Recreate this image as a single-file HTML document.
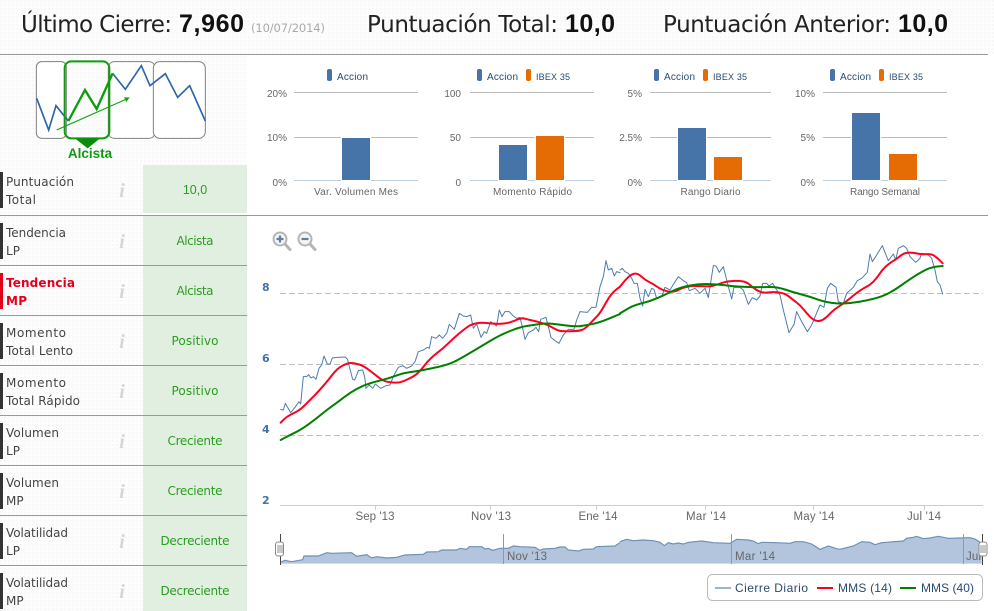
<!DOCTYPE html>
<html lang="es">
<head>
<meta charset="utf-8">
<title>Análisis</title>
<style>
html,body{margin:0;padding:0;background:#fff;width:994px;height:611px;overflow:hidden}
svg{display:block}
text{font-family:"DejaVu Sans","Liberation Sans",sans-serif}
.h{font-size:23px;fill:#222}
.hb{font-family:"Liberation Sans",sans-serif;font-size:25px;fill:#111;font-weight:bold}
.r{font-size:12px;fill:#444}
.rr{font-size:12px;fill:#e2001a;font-weight:bold}
.v{font-size:12px;fill:#2a9d1f;text-anchor:middle}
.i{font-family:"Liberation Serif",serif;font-size:20px;font-style:italic;font-weight:bold;fill:#d6d6d6;text-anchor:middle}
.l{font-family:"Liberation Sans",sans-serif;font-size:10px;fill:#274b6d}
.b{font-family:"Liberation Sans",sans-serif;font-size:9px;fill:#274b6d}
.y{font-family:"Liberation Sans",sans-serif;font-size:10px;fill:#666;text-anchor:end}
.c{font-family:"Liberation Sans",sans-serif;font-size:10px;fill:#666;text-anchor:middle}
.ya{font-size:11px;font-weight:bold;fill:#4572a7}
.x{font-family:"Liberation Sans",sans-serif;font-size:11.5px;fill:#666;text-anchor:middle}
.n{font-family:"Liberation Sans",sans-serif;font-size:11.5px;fill:#666}
.lg{font-family:"Liberation Sans",sans-serif;font-size:12px;fill:#274b6d}
</style>
</head>
<body>
<svg width="994" height="611" viewBox="0 0 994 611" xmlns="http://www.w3.org/2000/svg">
<defs>
<pattern id="d" width="4" height="4" patternUnits="userSpaceOnUse">
<rect width="4" height="4" fill="#fdfdfd"/><rect width="2" height="2" fill="#f8f8f8"/>
</pattern>
<clipPath id="nc"><rect x="281" y="530" width="702" height="40"/></clipPath>
</defs>
<rect width="994" height="611" fill="#fff"/>
<rect width="994" height="54" fill="url(#d)"/>
<rect y="55" width="247" height="110" fill="url(#d)"/>
<rect y="165" width="143" height="446" fill="url(#d)"/>

<!-- header -->
<text class="h" x="21" y="32" textLength="151">Último Cierre:</text>
<text class="hb" x="179" y="32" textLength="65">7,960</text>
<text x="251" y="32" font-size="11.5" fill="#aaa" textLength="74">(10/07/2014)</text>
<text class="h" x="367" y="32" textLength="191">Puntuación Total:</text>
<text class="hb" x="565" y="32" textLength="50">10,0</text>
<text class="h" x="663" y="32" textLength="228">Puntuación Anterior:</text>
<text class="hb" x="898" y="32" textLength="50">10,0</text>
<rect y="54" width="988" height="1" fill="#999"/>

<!-- logo -->
<g transform="translate(20,55) scale(.33333)">
<g fill="#fff" stroke="#808080" stroke-width="3">
<rect x="49" y="20" width="90" height="230" rx="16"/>
<rect x="265" y="20" width="140" height="230" rx="18"/>
<rect x="400" y="20" width="156" height="230" rx="20"/>
</g>
<polyline points="50,130 86,225 108,152 145,198" fill="none" stroke="#2b66ad" stroke-width="5"/>
<polyline points="278,55 316,103 364,32 390,92 436,56 473,127 509,92 556,198" fill="none" stroke="#2b66ad" stroke-width="5"/>
<rect x="134" y="19" width="134" height="231" rx="20" fill="none" stroke="#0c9c0c" stroke-width="6"/>
<polyline points="145,198 195,105 230,162 278,55" fill="none" stroke="#0c9c0c" stroke-width="7"/>
<line x1="110" y1="225" x2="320" y2="132" stroke="#17a317" stroke-width="3.5"/>
<polygon points="329,127 312,127 319,141" fill="#17a317"/>
<polygon points="165,250 240,250 203,280" fill="#0c8c0c"/>
</g>
<text x="90" y="158" font-size="13.5" font-weight="bold" fill="#119a11" text-anchor="middle" style="font-family:'Liberation Sans',sans-serif">Alcista</text>

<!-- rows -->
<rect x="143" y="165" width="104" height="48" fill="#e1efe0"/>
<rect x="143" y="216" width="104" height="395" fill="#e1efe0"/>
<rect y="215" width="988" height="1" fill="#999"/>
<g fill="#999">
<rect y="265" width="247" height="1"/><rect y="315" width="247" height="1"/><rect y="365" width="247" height="1"/>
<rect y="415" width="247" height="1"/><rect y="465" width="247" height="1"/><rect y="515" width="247" height="1"/><rect y="565" width="247" height="1"/>
</g>
<g fill="#333">
<rect y="172" width="3" height="36"/><rect y="223" width="3" height="36"/><rect y="323" width="3" height="36"/>
<rect y="373" width="3" height="36"/><rect y="423" width="3" height="36"/><rect y="473" width="3" height="36"/><rect y="523" width="3" height="36"/><rect y="573" width="3" height="36"/>
</g>
<rect y="273" width="3" height="36" fill="#e2001a"/>

<text class="r" x="6" y="186" textLength="68">Puntuación</text><text class="r" x="6" y="204" textLength="30">Total</text>
<text class="r" x="6" y="237" textLength="60">Tendencia</text><text class="r" x="6" y="255" textLength="14">LP</text>
<text class="rr" x="6" y="287" textLength="69">Tendencia</text><text class="rr" x="6" y="305" textLength="21">MP</text>
<text class="r" x="6" y="337" textLength="60">Momento</text><text class="r" x="6" y="355" textLength="67">Total Lento</text>
<text class="r" x="6" y="387" textLength="60">Momento</text><text class="r" x="6" y="405" textLength="74">Total Rápido</text>
<text class="r" x="6" y="437" textLength="53">Volumen</text><text class="r" x="6" y="455" textLength="14">LP</text>
<text class="r" x="6" y="487" textLength="53">Volumen</text><text class="r" x="6" y="505">MP</text>
<text class="r" x="6" y="537" textLength="62">Volatilidad</text><text class="r" x="6" y="555" textLength="14">LP</text>
<text class="r" x="6" y="587" textLength="62">Volatilidad</text><text class="r" x="6" y="605">MP</text>

<text class="i" x="122" y="197">i</text><text class="i" x="122" y="248">i</text><text class="i" x="122" y="298">i</text>
<text class="i" x="122" y="348">i</text><text class="i" x="122" y="398">i</text><text class="i" x="122" y="448">i</text>
<text class="i" x="122" y="498">i</text><text class="i" x="122" y="548">i</text><text class="i" x="122" y="598">i</text>

<text class="v" x="195" y="194" style="font-family:'Liberation Sans',sans-serif;font-size:12.5px">10,0</text>
<text class="v" x="195" y="245" textLength="37">Alcista</text>
<text class="v" x="195" y="295" textLength="37">Alcista</text>
<text class="v" x="195" y="345" textLength="47">Positivo</text>
<text class="v" x="195" y="395" textLength="47">Positivo</text>
<text class="v" x="195" y="445" textLength="55">Creciente</text>
<text class="v" x="195" y="495" textLength="55">Creciente</text>
<text class="v" x="195" y="545" textLength="69">Decreciente</text>
<text class="v" x="195" y="595" textLength="69">Decreciente</text>

<!-- small chart grids -->
<g fill="#bbb">
<rect x="294" y="92" width="124" height="1"/><rect x="294" y="137" width="124" height="1"/>
<rect x="470" y="92" width="124" height="1"/><rect x="470" y="137" width="124" height="1"/>
<rect x="650" y="92" width="121" height="1"/><rect x="650" y="137" width="121" height="1"/>
<rect x="823" y="92" width="124" height="1"/><rect x="823" y="137" width="124" height="1"/>
</g>
<g fill="#c0d0e0">
<rect x="294" y="180" width="124" height="1"/><rect x="470" y="180" width="124" height="1"/>
<rect x="650" y="180" width="121" height="1"/><rect x="823" y="180" width="124" height="1"/>
</g>
<g stroke="#fff" stroke-width="1">
<rect x="341.5" y="137.5" width="29" height="43" fill="#4673a8"/>
<rect x="498.5" y="144.5" width="29" height="36" fill="#4673a8"/>
<rect x="535.5" y="135.5" width="29" height="45" fill="#e56b05"/>
<rect x="677.5" y="127.5" width="29" height="53" fill="#4673a8"/>
<rect x="713.5" y="156.5" width="29" height="24" fill="#e56b05"/>
<rect x="851.5" y="112.5" width="29" height="68" fill="#4673a8"/>
<rect x="888.5" y="153.5" width="29" height="27" fill="#e56b05"/>
</g>
<g fill="#4673a8">
<rect x="327" y="69" width="5" height="12" rx="2"/><rect x="477" y="69" width="5" height="12" rx="2"/>
<rect x="654" y="69" width="5" height="12" rx="2"/><rect x="830" y="69" width="5" height="12" rx="2"/>
</g>
<g fill="#e56b05">
<rect x="526" y="69" width="5" height="12" rx="2"/><rect x="703" y="69" width="5" height="12" rx="2"/><rect x="879" y="69" width="5" height="12" rx="2"/>
</g>
<text class="l" x="337" y="80" textLength="31">Accion</text>
<text class="l" x="487" y="80" textLength="31">Accion</text><text class="b" x="536" y="80" textLength="34">IBEX 35</text>
<text class="l" x="664" y="80" textLength="31">Accion</text><text class="b" x="713" y="80" textLength="34">IBEX 35</text>
<text class="l" x="840" y="80" textLength="31">Accion</text><text class="b" x="889" y="80" textLength="34">IBEX 35</text>

<text class="y" x="287" y="97">20%</text><text class="y" x="287" y="141">10%</text><text class="y" x="287" y="186">0%</text>
<text class="y" x="461" y="97">100</text><text class="y" x="461" y="141">50</text><text class="y" x="461" y="186">0</text>
<text class="y" x="642" y="97">5%</text><text class="y" x="642" y="141">2.5%</text><text class="y" x="642" y="186">0%</text>
<text class="y" x="815" y="97">10%</text><text class="y" x="815" y="141">5%</text><text class="y" x="815" y="186">0%</text>

<text class="c" x="356" y="195" textLength="84">Var. Volumen Mes</text>
<text class="c" x="532.5" y="195" textLength="79">Momento Rápido</text>
<text class="c" x="710.5" y="195" textLength="60">Rango Diario</text>
<text class="c" x="885" y="195" textLength="70">Rango Semanal</text>

<!-- zoom icons -->
<g fill="none">
<line x1="285" y1="244" x2="290" y2="249.5" stroke="#b5b5b5" stroke-width="3" stroke-linecap="round"/>
<circle cx="280" cy="239" r="6.5" stroke="#b5b5b5" stroke-width="2" fill="#f4f4f4"/>
<path d="M276.5 239h7M280 235.5v7" stroke="#5f7f9f" stroke-width="2.2"/>
<line x1="310" y1="244" x2="315" y2="249.5" stroke="#b5b5b5" stroke-width="3" stroke-linecap="round"/>
<circle cx="305" cy="239" r="6.5" stroke="#b5b5b5" stroke-width="2" fill="#f4f4f4"/>
<path d="M301.5 239h7" stroke="#5f7f9f" stroke-width="2.2"/>
</g>

<!-- main chart -->
<g stroke="#c0c0c0" stroke-width="1" stroke-dasharray="6 3">
<line x1="280" y1="293.5" x2="983" y2="293.5"/>
<line x1="280" y1="364.5" x2="983" y2="364.5"/>
<line x1="280" y1="435.5" x2="983" y2="435.5"/>
</g>
<rect x="280" y="505" width="703" height="1" fill="#c0d0e0"/>
<g fill="#c0d0e0">
<rect x="375" y="505" width="1" height="5"/><rect x="490" y="505" width="1" height="5"/><rect x="596" y="505" width="1" height="5"/>
<rect x="705" y="505" width="1" height="5"/><rect x="813" y="505" width="1" height="5"/><rect x="924" y="505" width="1" height="5"/>
</g>
<text class="ya" x="262" y="291">8</text><text class="ya" x="262" y="362">6</text><text class="ya" x="262" y="433">4</text><text class="ya" x="262" y="504">2</text>
<text class="x" x="375" y="520" textLength="39">Sep '13</text>
<text class="x" x="491" y="520" textLength="40">Nov '13</text>
<text class="x" x="598" y="520" textLength="39">Ene '14</text>
<text class="x" x="706" y="520" textLength="40">Mar '14</text>
<text class="x" x="814" y="520" textLength="41">May '14</text>
<text class="x" x="924" y="520" textLength="34">Jul '14</text>

<g fill="none" stroke-linejoin="round" stroke-linecap="round">
<g transform="translate(250,220) scale(.33333)">
<polyline stroke="#4f7bb0" stroke-width="3" points="92,568 100,570 106,550 122,578 135,562 147,545 152,552 160,470 170,470 176,464 183,474 190,470 198,478 207,445 215,435 222,408 232,432 240,432 247,414 262,412 285,411 293,418 298,440 308,478 314,480 325,452 338,450 344,470 348,505 358,495 368,505 376,492 392,505 408,497 420,495 432,465 445,442 458,437 470,445 485,438 495,425 505,395 520,390 532,382 538,385 545,350 558,355 568,345 578,355 590,340 598,313 613,328 628,280 640,288 650,290 662,285 670,325 680,312 693,352 703,335 710,340 722,305 740,318 748,270 756,290 765,275 778,275 790,288 800,295 810,292 818,325 825,358 835,338 850,330 858,322 866,335 872,298 888,292 895,320 903,352 915,362 927,370 940,345 955,328 972,328 980,300 990,275 1012,277 1025,262 1038,262 1050,200 1060,170 1068,122 1075,150 1085,145 1093,168 1100,155 1110,158"/>
</g>
<g transform="translate(620,230) scale(.33333)">
<polyline stroke="#4f7bb0" stroke-width="3" points="0,120 7,115 15,125 25,130 35,145 42,160 52,160 60,205 68,228 75,178 85,200 95,175 102,178 110,205 125,200 135,172 150,180 162,160 175,140 190,152 200,158 208,182 225,175 240,190 255,175 265,203 280,107 288,108 298,127 310,110 325,170 335,207 342,172 360,172 370,180 385,223 397,203 410,210 420,198 428,160 440,160 447,168 458,160 470,180 480,195 490,240 507,308 522,283 530,245 545,275 562,305 575,285 600,225 612,232 622,175 632,160 648,172 655,215 670,220 680,190 700,172 712,152 725,145 742,127 750,72 757,95 770,75 787,47 805,92 820,72 827,90 835,55 850,47 860,55 870,80 887,97 900,85 905,70 925,75 935,85 945,120 952,155 960,165 968,192"/>
</g>
<g transform="translate(250,220) scale(.33333)">
<path stroke="#ff0020" stroke-width="6" d="M92,608 L101,599 Q110,590 120,585 Q130,580 141,574 Q152,568 163.5,556.5 Q175,545 190,530 Q205,515 220,497.5 Q235,480 248.5,462.5 Q262,445 278.5,436.5 Q295,428 305,429 Q315,430 327.5,433.5 Q340,437 355,448.5 Q370,460 385,471.5 Q400,483 412.5,485.5 Q425,488 437.5,488 Q450,488 465,481.5 Q480,475 492.5,467.5 Q505,460 522.5,437.5 Q540,415 560,400 Q580,385 595,370 Q610,355 625,342.5 Q640,330 650,322.5 Q660,315 670,312 Q680,309 690,308.5 Q700,308 710,309 Q720,310 732.5,311 Q745,312 757.5,311 Q770,310 780,307 Q790,304 802.5,298.5 Q815,293 825,296 Q835,299 845,301 Q855,303 867.5,306.5 Q880,310 890,314 Q900,318 912.5,325.5 Q925,333 937.5,333.5 Q950,334 967.5,333.5 Q985,333 995,330 Q1005,327 1017.5,313.5 Q1030,300 1040,290 Q1050,280 1062.5,257.5 Q1075,235 1082.5,225 Q1090,215 1100,207.5 L1110,200"/>
</g>
<g transform="translate(620,230) scale(.33333)">
<path stroke="#ff0020" stroke-width="6" d="M0,170 L10,157.5 Q20,145 29,138 Q38,131 46.5,131 Q55,131 65,140.5 Q75,150 87.5,156 Q100,162 112.5,171 Q125,180 142.5,184 Q160,188 175,180 Q190,172 205,169.5 Q220,167 242.5,168.5 Q265,170 277.5,167.5 Q290,165 305,159 Q320,153 347.5,152.5 Q375,152 385,161 Q395,170 410,180 Q425,190 442.5,187.5 Q460,185 477.5,187.5 Q495,190 507.5,200 Q520,210 530,217.5 Q540,225 550,237.5 Q560,250 570,260 Q580,270 590,272.5 Q600,275 610,268.5 Q620,262 630,251 Q640,240 657.5,229 Q675,218 690,205 Q705,192 717.5,183.5 Q730,175 740,170 Q750,165 760,155 Q770,145 780,130 Q790,115 802.5,105 Q815,95 822.5,91 Q830,87 840,78.5 Q850,70 860,68.5 Q870,67 880,68.5 Q890,70 897.5,71.5 Q905,73 920,72.5 Q935,72 942.5,77 Q950,82 959,91 L968,100"/>
</g>
<g transform="translate(250,220) scale(.33333)">
<path stroke="#008000" stroke-width="6" d="M92,660 L106,652.5 Q120,645 137.5,636.5 Q155,628 177.5,611.5 Q200,595 215,582.5 Q230,570 247.5,557.5 Q265,545 282.5,531.5 Q300,518 320,507 Q340,496 360,490 Q380,484 400,479 Q420,474 440,466.5 Q460,459 480,456.5 Q500,454 520,450 Q540,446 570,439.5 Q600,433 625,419 Q650,405 675,390 Q700,375 725,360 Q750,345 780,333 Q810,321 830,318 Q850,315 870,312 Q890,309 910,311.5 Q930,314 952.5,317 Q975,320 992.5,318 Q1010,316 1030,311.5 Q1050,307 1080,294.5 L1110,282"/>
</g>
<g transform="translate(620,230) scale(.33333)">
<path stroke="#008000" stroke-width="6" d="M0,250 L20,238 Q40,226 65,220 Q90,214 115,203 Q140,192 160,182 Q180,172 210,166.5 Q240,161 270,162.5 Q300,164 325,167 Q350,170 385,171 Q420,172 445,171 Q470,170 495,178.5 Q520,187 545,193.5 Q570,200 595,209 Q620,218 650,220 Q680,222 720,215 Q760,208 785,199 Q810,190 845,165 Q880,140 905,126 Q930,112 949,110 L968,108"/>
</g>
</g>

<!-- navigator -->
<g transform="translate(250,490) scale(.33333)">
<polygon fill="#b2c5dc" stroke="none" points="92,221 92,216 105,211 125,215 158,209 162,198 205,198 230,188 245,190 305,188 320,199 350,194 365,204 380,200 410,204 440,202 465,195 520,193 530,186 565,185 575,180 620,180 630,175 650,178 658,170 695,170 705,177 715,175 728,181 750,175 775,175 790,168 810,170 855,172 870,181 880,177 915,175 930,171 945,171 955,180 985,183 1000,178 1030,177 1040,170 1095,168 1110,158 1110,221"/>
<polyline fill="none" stroke="#6f8fb8" stroke-width="3.5" points="92,216 105,211 125,215 158,209 162,198 205,198 230,188 245,190 305,188 320,199 350,194 365,204 380,200 410,204 440,202 465,195 520,193 530,186 565,185 575,180 620,180 630,175 650,178 658,170 695,170 705,177 715,175 728,181 750,175 775,175 790,168 810,170 855,172 870,181 880,177 915,175 930,171 945,171 955,180 985,183 1000,178 1030,177 1040,170 1095,168 1110,158"/>
</g>
<g transform="translate(620,490) scale(.33333)">
<polygon fill="#b2c5dc" stroke="none" points="0,221 0,155 20,148 40,152 70,150 100,152 120,157 133,167 145,158 160,162 175,159 190,162 205,157 245,153 280,158 330,160 350,148 385,150 400,153 415,161 425,157 470,158 510,160 525,155 550,155 575,162 600,178 625,168 650,176 660,178 700,168 725,155 750,157 765,164 785,158 850,153 860,145 880,142 890,139 910,146 930,144 955,139 985,145 1020,144 1050,143 1065,147 1085,160 1085,221"/>
<polyline fill="none" stroke="#6f8fb8" stroke-width="3.5" points="0,155 20,148 40,152 70,150 100,152 120,157 133,167 145,158 160,162 175,159 190,162 205,157 245,153 280,158 330,160 350,148 385,150 400,153 415,161 425,157 470,158 510,160 525,155 550,155 575,162 600,178 625,168 650,176 660,178 700,168 725,155 750,157 765,164 785,158 850,153 860,145 880,142 890,139 910,146 930,144 955,139 985,145 1020,144 1050,143 1065,147 1085,160"/>
</g>
<g fill="#8a9bb0">
<rect x="503" y="534" width="1" height="30"/><rect x="731" y="534" width="1" height="30"/><rect x="963" y="534" width="1" height="30"/>
</g>
<g clip-path="url(#nc)">
<text class="n" x="507" y="560" textLength="40">Nov '13</text>
<text class="n" x="735" y="560" textLength="40">Mar '14</text>
<text class="n" x="966" y="560" textLength="34">Jul '14</text>
</g>
<g stroke="#444" stroke-width="1" fill="#fff">
<line x1="280.5" y1="534" x2="280.5" y2="565"/>
<line x1="982.5" y1="534" x2="982.5" y2="565"/>
<rect x="275.5" y="542" width="8" height="14" rx="2.5" stroke="#888"/>
<rect x="979" y="542" width="8" height="14" rx="2.5" stroke="#888"/>
</g>
<path d="M278 545v8M280 545v8M282 545v8M981 545v8M983 545v8M985 545v8" stroke="#777" stroke-width=".8" fill="none"/>

<!-- legend -->
<rect x="707.5" y="574.5" width="275" height="26" rx="5" fill="#fff" stroke="#bbb"/>
<rect x="715" y="587" width="16" height="2" fill="#9ab3d1"/>
<text class="lg" x="735" y="592" textLength="73">Cierre Diario</text>
<rect x="817" y="587" width="16" height="2" fill="#ff0020"/>
<text class="lg" x="838" y="592" textLength="54">MMS (14)</text>
<rect x="900" y="587" width="16" height="2" fill="#008000"/>
<text class="lg" x="921" y="592" textLength="53">MMS (40)</text>
</svg>
</body>
</html>
